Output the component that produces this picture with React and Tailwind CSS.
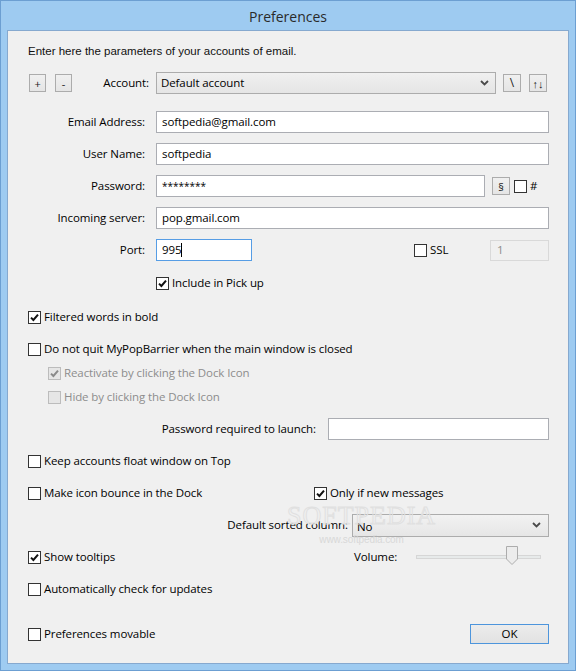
import React from "react";

function Check({ checked, disabled }) {
  return (
    <span
      className={
        disabled
          ? "w-[13px] h-[13px] border border-[#bcbcbc] bg-[#e6e6e6] flex items-center justify-center shrink-0"
          : "w-[13px] h-[13px] border border-[#333333] bg-white flex items-center justify-center shrink-0"
      }
    >
      {checked && (
        <svg width="9" height="9" viewBox="0 0 9 9">
          <path
            d="M1 4.6 L3.4 7 L8 1.6"
            fill="none"
            stroke={disabled ? "#8a8a8a" : "#111"}
            strokeWidth="2"
          />
        </svg>
      )}
    </span>
  );
}

function CheckRow({ checked, disabled, label }) {
  return (
    <div className="flex items-center h-[16px]">
      <Check checked={checked} disabled={disabled} />
      <span className={disabled ? "ml-[3px] text-[#8d8d8d]" : "ml-[3px] text-black"}>{label}</span>
    </div>
  );
}

function Chevron() {
  return (
    <svg width="9" height="6" viewBox="0 0 9 6">
      <path d="M1 1 L4.5 4.5 L8 1" fill="none" stroke="#4a4a4a" strokeWidth="1.8" />
    </svg>
  );
}

function SmallBtn({ children, cls }) {
  return (
    <div
      className={
        "h-[18px] border border-[#acacac] bg-gradient-to-b from-[#f0f0f0] to-[#e5e5e5] flex items-center justify-center text-[11px] text-[#222] leading-none " +
        cls
      }
    >
      {children}
    </div>
  );
}

export default function App() {
  return (
    <div className="w-[576px] h-[671px] border border-[#6c9fd2] bg-[#9ecbf1] flex flex-col font-['Open_Sans','Noto_Sans',sans-serif] text-[11.5px] tracking-[-0.1px] text-black">
      <div className="h-[29px] flex items-center justify-center pt-[2px] text-[14px] tracking-normal text-[#2a2a2a]">
        Preferences
      </div>
      <div className="relative mx-[6px] mb-[6px] flex-1 border border-[#86a9cf] bg-[#f0f0f0] pl-[20px] pr-[19px] flex flex-col">
        {/* intro */}
        <div className="mt-[13px] h-[16px] flex items-center font-['Liberation_Sans',sans-serif] text-[11.5px] tracking-normal text-[#111]">
          Enter here the parameters of your accounts of email.
        </div>

        {/* account row */}
        <div className="mt-[12px] h-[22px] flex items-center">
          <SmallBtn cls="ml-[1px] w-[17px]">+</SmallBtn>
          <SmallBtn cls="ml-[9px] w-[17px]">-</SmallBtn>
          <div className="w-[77px] text-right">Account:</div>
          <div className="ml-[7px] w-[340px] h-[22px] border border-[#acacac] bg-gradient-to-b from-[#f0f0f0] to-[#e5e5e5] flex items-center justify-between pl-[4px] pr-[6px]">
            <span>Default account</span>
            <Chevron />
          </div>
          <SmallBtn cls="ml-[7px] w-[18px] text-[12px]">\</SmallBtn>
          <SmallBtn cls="ml-[8px] w-[18px] text-[10px] text-[#1a2a6a]">↑↓</SmallBtn>
        </div>

        {/* email */}
        <div className="mt-[17px] h-[22px] flex items-center">
          <div className="w-[117px] text-right">Email Address:</div>
          <div className="ml-[11px] flex-1 h-[22px] border border-[#abadb3] bg-white flex items-center pl-[5px]">
            softpedia@gmail.com
          </div>
        </div>

        {/* user */}
        <div className="mt-[10px] h-[22px] flex items-center">
          <div className="w-[117px] text-right">User Name:</div>
          <div className="ml-[11px] flex-1 h-[22px] border border-[#abadb3] bg-white flex items-center pl-[5px]">
            softpedia
          </div>
        </div>

        {/* password */}
        <div className="mt-[10px] h-[22px] flex items-center">
          <div className="w-[117px] text-right">Password:</div>
          <div className="ml-[11px] w-[329px] h-[22px] border border-[#abadb3] bg-white flex items-center pl-[5px] text-[10px] tracking-[0px]">
            ********
          </div>
          <SmallBtn cls="ml-[7px] w-[18px]">§</SmallBtn>
          <span className="ml-[4px]">
            <Check />
          </span>
          <span className="ml-[3px]">#</span>
        </div>

        {/* incoming */}
        <div className="mt-[10px] h-[22px] flex items-center">
          <div className="w-[117px] text-right">Incoming server:</div>
          <div className="ml-[11px] flex-1 h-[22px] border border-[#abadb3] bg-white flex items-center pl-[5px]">
            pop.gmail.com
          </div>
        </div>

        {/* port */}
        <div className="mt-[10px] h-[22px] flex items-center">
          <div className="w-[117px] text-right">Port:</div>
          <div className="ml-[11px] w-[96px] h-[22px] border border-[#569de5] bg-white flex items-center pl-[5px]">
            995<span className="w-[1px] h-[14px] bg-black"></span>
          </div>
          <div className="ml-[162px] flex items-center">
            <Check />
            <span className="ml-[3px]">SSL</span>
          </div>
          <div className="ml-auto w-[59px] h-[21px] border border-[#d9d9d9] bg-[#f0f0f0] flex items-center pl-[6px] text-[#8d8d8d]">
            1
          </div>
        </div>

        <div className="mt-[14px] pl-[128px]">
          <CheckRow checked label="Include in Pick up" />
        </div>

        <div className="mt-[18px]">
          <CheckRow checked label="Filtered words in bold" />
        </div>

        <div className="mt-[16px]">
          <CheckRow label="Do not quit MyPopBarrier when the main window is closed" />
        </div>
        <div className="mt-[8px] pl-[20px]">
          <CheckRow checked disabled label="Reactivate by clicking the Dock Icon" />
        </div>
        <div className="mt-[8px] pl-[20px]">
          <CheckRow disabled label="Hide by clicking the Dock Icon" />
        </div>

        <div className="mt-[13px] h-[22px] flex items-center justify-end">
          <span>Password required to launch:</span>
          <div className="ml-[12px] w-[221px] h-[22px] border border-[#abadb3] bg-white"></div>
        </div>

        <div className="mt-[13px]">
          <CheckRow label="Keep accounts float window on Top" />
        </div>

        <div className="mt-[16px] flex items-center">
          <div className="w-[286px]">
            <CheckRow label="Make icon bounce in the Dock" />
          </div>
          <CheckRow checked label="Only if new messages" />
        </div>

        <div className="mt-[13px] h-[22px] flex items-center justify-end">
          <span>Default sorted column:</span>
          <div className="ml-[4px] w-[197px] h-[23px] border border-[#acacac] bg-gradient-to-b from-[#f2f2f2] to-[#e6e6e6] flex items-center justify-between pl-[4px] pr-[7px] pt-[3px]">
            <span>No</span>
            <span className="-mt-[3px]">
              <Chevron />
            </span>
          </div>
        </div>

        <div className="mt-[13px] flex items-center h-[16px]">
          <div className="w-[326px]">
            <CheckRow checked label="Show tooltips" />
          </div>
          <div className="w-[62px]">Volume:</div>
          <div className="relative w-[125px] h-[18px] flex items-center">
            <div className="w-full h-[4px] border border-[#d6d6d6] bg-[#e7eaea]"></div>
            <svg className="absolute left-[90px] top-[-2px]" width="12" height="19" viewBox="0 0 12 19">
              <path d="M0.5 0.5 H11.5 V13 L6 18.5 L0.5 13 Z" fill="#ececec" stroke="#acacac" />
            </svg>
          </div>
        </div>

        <div className="mt-[16px]">
          <CheckRow label="Automatically check for updates" />
        </div>

        <div className="mt-[27px] h-[20px] flex items-center justify-between">
          <CheckRow label="Preferences movable" />
          <div className="w-[79px] h-[20px] border border-[#4d95dc] bg-gradient-to-b from-[#ececec] to-[#e2e2e2] flex items-center justify-center">
            OK
          </div>
        </div>

        {/* watermark */}
        <div className="absolute left-[279px] top-[472px] pointer-events-none flex flex-col items-center">
          <span className="font-['Liberation_Serif',serif] text-[26px] leading-none tracking-[1px] text-transparent [-webkit-text-stroke:1px_#e0e0e0]">
            SOFTPEDIA
          </span>
          <span className="mt-[6px] font-['Liberation_Sans',sans-serif] text-[10px] leading-none text-[#d8d8d8]">
            www.softpedia.com
          </span>
        </div>
      </div>
    </div>
  );
}
